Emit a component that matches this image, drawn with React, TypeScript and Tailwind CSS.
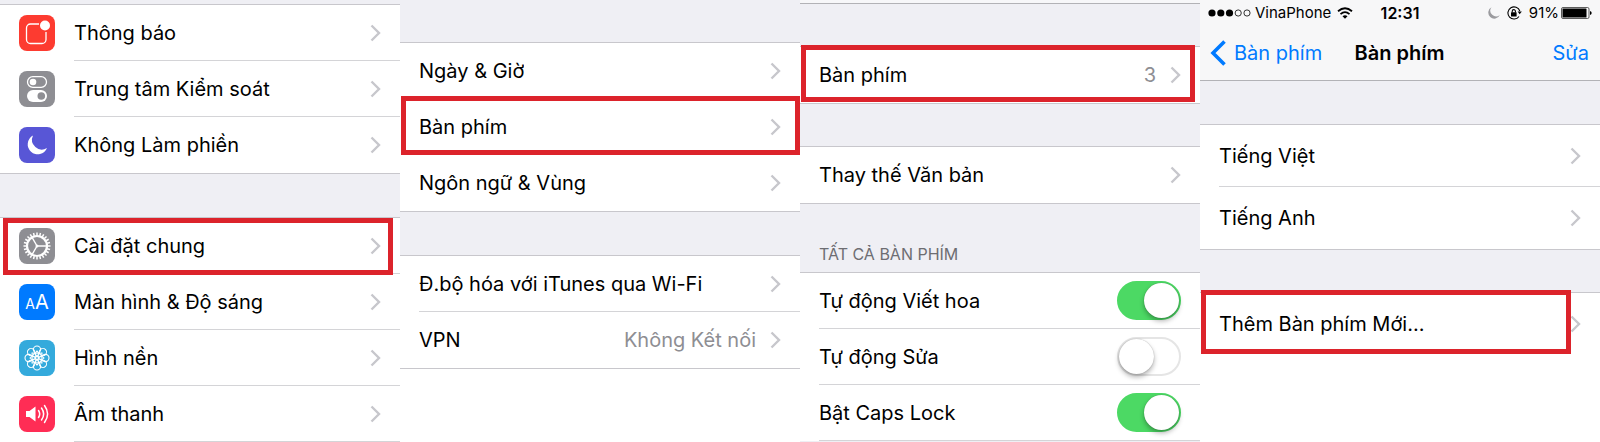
import type { ReactNode } from 'react'
import clsx from 'clsx'

type RowProps = {
  label: string
  icon?: ReactNode
  value?: string
  tall?: boolean
  last?: boolean
  plain?: boolean
  highlight?: string
}

function Chevron() {
  return (
    <svg className="h-[18px] w-[11px] shrink-0" viewBox="0 0 11 18" fill="none" stroke="#c7c7cc" strokeWidth="2.4">
      <path d="M1.5 1.5 9 9l-7.500 7.500" />
    </svg>
  )
}

// Red frame that marks the row to tap
function Highlight({ className }: { className: string }) {
  return <span className={clsx('pointer-events-none absolute z-10 border-[5px] border-[#dc232b]', className)} />
}

function Tile({ className, children }: { className: string; children: ReactNode }) {
  return (
    <span className={clsx('mr-[19px] flex size-9 shrink-0 justify-center rounded-lg', className)}>
      {children}
    </span>
  )
}

function Row({ label, icon, value, tall, last, plain, highlight }: RowProps) {
  return (
    <li className="relative">
      <button type="button" className="flex w-full items-center pl-[19px] text-left">
        {icon}
        <span
          className={clsx(
            'flex min-w-0 flex-1 items-center justify-between border-b pr-[19px]',
            tall ? 'h-[62px]' : 'h-14',
            last || plain ? 'border-transparent' : 'border-[#d4d4d7]'
          )}
        >
          <span className="truncate leading-8">{label}</span>
          <span className="flex shrink-0 items-center gap-3.5">
            {value && <span className="text-[#8e8e93]">{value}</span>}
            <Chevron />
          </span>
        </span>
      </button>
      {highlight && <Highlight className={highlight} />}
    </li>
  )
}

function SwitchRow({ label, on }: { label: string; on?: boolean }) {
  return (
    <li className="pl-[19px]">
      <label className="flex h-14 items-center justify-between border-b border-[#d4d4d7] pr-[19px]">
        <span className="leading-8">{label}</span>
        <input
          type="checkbox"
          role="switch"
          defaultChecked={on}
          className="flex h-[39px] w-16 shrink-0 appearance-none items-center rounded-full border-2 border-[#e5e5e5] bg-white before:size-[35px] before:rounded-full before:bg-white before:shadow-[0_3px_5px_rgba(0,0,0,0.3),0_0_1px_rgba(0,0,0,0.35)] checked:justify-end checked:border-[#4cd964] checked:bg-[#4cd964]"
        />
      </label>
    </li>
  )
}

function Group({ children, open }: { children: ReactNode; open?: boolean }) {
  return (
    <ul className={clsx('relative border-t border-[#c8c7cc] bg-white', !open && '-mb-px border-b')}>{children}</ul>
  )
}

function NotificationIcon() {
  return (
    <svg className="size-9" viewBox="0 0 36 36" fill="none">
      <path d="M20 9H11.500a4 4 0 0 0-4 4v11.500a4 4 0 0 0 4 4H23a4 4 0 0 0 4-4V17" stroke="#fff" strokeWidth="1.300" />
      <circle cx="26" cy="10.500" r="5" fill="#fff" />
    </svg>
  )
}

function ControlIcon() {
  return (
    <svg className="size-9" viewBox="0 0 36 36" fill="none">
      <rect x="8.500" y="5.700" width="19" height="10.600" rx="5.300" stroke="#fff" strokeWidth="1.300" />
      <circle cx="14" cy="11" r="3.300" fill="#fff" />
      <rect x="8" y="19" width="20" height="12" rx="6" fill="#fff" />
      <circle cx="22.300" cy="25" r="3.800" fill="#8e8e93" />
    </svg>
  )
}

function GearIcon() {
  const teeth = Array.from({ length: 24 }, (_, i) => i * 15)
  return (
    <svg className="size-9" viewBox="0 0 36 36" fill="none" stroke="#fff">
      <circle cx="18" cy="18" r="10" strokeWidth="2.200" />
      {teeth.map((angle) => (
        <path key={angle} d="M18 4.500v3" strokeWidth="1.500" transform={`rotate(${angle} 18 18)`} />
      ))}
      <path d="M18 18h9.500M18 18l-4.800-8.300M18 18l-4.800 8.300" strokeWidth="1.400" />
      <circle cx="18" cy="18" r="1.500" fill="#fff" stroke="none" />
    </svg>
  )
}

function FlowerIcon() {
  const petals = Array.from({ length: 8 }, (_, i) => i * 45)
  return (
    <svg className="size-9" viewBox="0 0 36 36" fill="none" stroke="#fff" strokeWidth="1.100">
      {petals.map((angle) => (
        <g key={angle} transform={`rotate(${angle} 18 18)`}>
          <circle cx="18" cy="9.600" r="3.600" />
          <path d="M18 16.500c-2-1.500-2-4 0-5.500 2 1.500 2 4 0 5.500Z" />
        </g>
      ))}
      <circle cx="18" cy="18" r="1.600" />
    </svg>
  )
}

function SoundIcon() {
  return (
    <svg className="size-9" viewBox="0 0 36 36" fill="none" stroke="#fff" strokeWidth="1.500" strokeLinecap="round">
      <path d="M7 15h3.500l6-4.500v15L10.500 21H7Z" fill="#fff" stroke="none" />
      <path d="M19.500 14.500q2.400 3.500 0 7M22.500 12q4.300 6 0 12M25.500 9.500q6.200 8.500 0 17" />
    </svg>
  )
}

function StatusBar() {
  return (
    <div className="grid h-[26px] grid-cols-[1fr_auto_1fr] items-center px-2 text-[15px] leading-5">
      <div className="flex items-center">
        <svg className="h-2 w-[43px]" viewBox="0 0 43 8">
          <circle cx="4" cy="4" r="3.600" />
          <circle cx="12.800" cy="4" r="3.600" />
          <circle cx="21.500" cy="4" r="3.600" />
          <circle cx="30.200" cy="4" r="3.100" fill="none" stroke="#000" strokeWidth=".8" />
          <circle cx="39" cy="4" r="3.100" fill="none" stroke="#000" strokeWidth=".8" />
        </svg>
        <span className="ml-1">VinaPhone</span>
        <svg className="ml-1.5 h-3 w-4" viewBox="0 0 16 12" fill="none" stroke="#000" strokeWidth="1.800">
          <path d="M1 4.300q7-6 14 0M3.500 7.100q4.500-3.900 9 0" />
          <path d="M8 11.800 5.500 9.200q2.500-2 5 0Z" fill="#000" stroke="none" />
        </svg>
      </div>
      <time className="text-base font-semibold">12:31</time>
      <div className="flex items-center justify-end">
        <svg className="h-3 w-3" viewBox="0 0 12 12" fill="#9b9b9f">
          <path d="M3.500.3A6 6 0 1 0 11.800 8 5.700 5.700 0 0 1 3.500.3Z" />
        </svg>
        <svg className="ml-[7px] h-[14px] w-[15px]" viewBox="0 0 15 14" fill="none" stroke="#000" strokeWidth="1.100">
          <path d="M12.800 5A6.100 6.100 0 1 0 12 10.500" />
          <path d="M10.600 5.400h4.200l-2.100 2.800Z" fill="#000" stroke="none" />
          <rect x="4" y="6.200" width="5.600" height="4.200" rx=".5" fill="#000" stroke="none" />
          <path d="M5.200 6.500V5.200a1.600 1.600 0 0 1 3.200 0v1.300" />
        </svg>
        <span className="ml-[7px]">91%</span>
        <svg className="ml-0.5 h-3 w-[31px]" viewBox="0 0 31 12">
          <rect x=".5" y=".5" width="27.500" height="11" rx="1.500" fill="none" stroke="#333" strokeWidth=".8" />
          <rect x="1.500" y="1.500" width="24" height="9" rx=".5" />
          <path d="M29 4q1.700.5 1.700 2T29 8Z" />
        </svg>
      </div>
    </div>
  )
}

function SettingsPanel() {
  return (
    <section className="min-w-0 bg-[#efeff4] pt-1">
      <Group>
        <Row label="Thông báo" icon={<Tile className="bg-[#fd3b30]"><NotificationIcon /></Tile>} />
        <Row label="Trung tâm Kiểm soát" icon={<Tile className="bg-[#8e8e93]"><ControlIcon /></Tile>} />
        <Row
          label="Không Làm phiền"
          last
          icon={
            <Tile className="bg-[#5856d6]">
              <svg className="size-9" viewBox="0 0 36 36" fill="#fff">
                <path d="M14 8.500A10 10 0 1 0 28 21 9.800 9.800 0 0 1 14 8.500Z" />
              </svg>
            </Tile>
          }
        />
      </Group>
      <div className="h-11" />
      <Group open>
        <Row
          label="Cài đặt chung"
          icon={<Tile className="bg-[#8e8e93]"><GearIcon /></Tile>}
          highlight="top-0 -bottom-px left-[3px] right-[7px]"
        />
        <Row
          label="Màn hình & Độ sáng"
          icon={
            <Tile className="items-baseline bg-[#007aff] pt-1 text-white">
              <span className="text-sm leading-7">A</span>
              <span className="text-xl leading-7">A</span>
            </Tile>
          }
        />
        <Row label="Hình nền" icon={<Tile className="bg-[#34aadc]"><FlowerIcon /></Tile>} />
        <Row label="Âm thanh" icon={<Tile className="bg-[#ff2d55]"><SoundIcon /></Tile>} />
      </Group>
    </section>
  )
}

function GeneralPanel() {
  return (
    <section className="flex min-w-0 flex-col bg-[#efeff4] pt-[42px]">
      <Group>
        <Row label="Ngày & Giờ" />
        <Row label="Bàn phím" highlight="-top-[3px] bottom-0 left-px right-0" />
        <Row label="Ngôn ngữ & Vùng" last />
      </Group>
      <div className="h-11" />
      <Group>
        <Row label="Đ.bộ hóa với iTunes qua Wi-Fi" />
        <Row label="VPN" value="Không Kết nối" last />
      </Group>
      <div className="flex-1 bg-white" />
    </section>
  )
}

function KeyboardPanel() {
  return (
    <section className="min-w-0 bg-[#efeff4]">
      <div className="h-1 border-b border-[#b2b2b6] bg-[#f7f7f9]" />
      <div className="h-[42px]" />
      <Group>
        <Row label="Bàn phím" value="3" last highlight="-top-0.5 bottom-px left-px right-[5px]" />
      </Group>
      <div className="h-[43px]" />
      <Group>
        <Row label="Thay thế Văn bản" last />
      </Group>
      <h2 className="flex h-[69px] items-end px-[19px] pb-2 text-base leading-5 text-[#6d6d72]">TẤT CẢ BÀN PHÍM</h2>
      <Group open>
        <SwitchRow label="Tự động Viết hoa" on />
        <SwitchRow label="Tự động Sửa" />
        <SwitchRow label="Bật Caps Lock" on />
      </Group>
    </section>
  )
}

function LanguagesPanel() {
  return (
    <section className="flex min-w-0 flex-col bg-[#efeff4]">
      <header className="h-[81px] border-b border-[#b2b2b6] bg-[#f7f7f8]">
        <StatusBar />
        <nav className="grid h-[54px] grid-cols-[1fr_auto_1fr] items-center pr-[11px] pl-2.5 text-[#007aff]">
          <button type="button" className="flex items-center gap-2">
            <svg className="h-[26px] w-4" viewBox="0 0 16 26" fill="none" stroke="currentColor" strokeWidth="3.600">
              <path d="M14.500 1.500 3 13l11.500 11.500" />
            </svg>
            Bàn phím
          </button>
          <h1 className="font-semibold text-black">Bàn phím</h1>
          <button type="button" className="justify-self-end">Sửa</button>
        </nav>
      </header>
      <div className="h-[43px]" />
      <Group>
        <Row label="Tiếng Việt" tall />
        <Row label="Tiếng Anh" tall last />
      </Group>
      <div className="h-[43px]" />
      <Group open>
        <Row label="Thêm Bàn phím Mới..." tall plain highlight="-top-[3px] bottom-px left-px right-[29px]" />
      </Group>
      <div className="flex-1 bg-white" />
    </section>
  )
}

export default function App() {
  return (
    <main className="grid min-h-screen grid-cols-4 bg-white font-['Inter',sans-serif] text-xl text-black">
      <SettingsPanel />
      <GeneralPanel />
      <KeyboardPanel />
      <LanguagesPanel />
    </main>
  )
}
